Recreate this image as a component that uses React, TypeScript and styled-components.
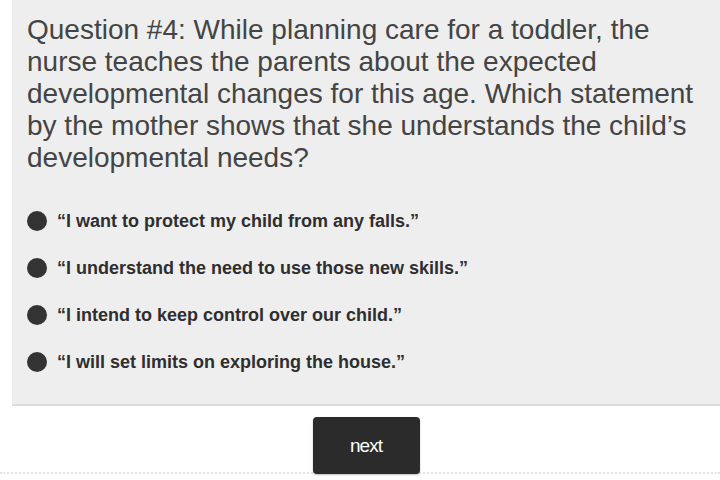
import React from 'react';
import styled, { createGlobalStyle } from 'styled-components';

const GlobalStyle = createGlobalStyle`
  html, body {
    margin: 0;
    padding: 0;
    background: #ffffff;
  }
  body {
    font-family: "Liberation Sans", Arial, sans-serif;
  }
`

const Page = styled.div`
  width: 720px;
  height: 480px;
  overflow: hidden;
`

const Panel = styled.section`
  margin-left: 12px;
  background: #eeeeee;
  border-bottom: 2px solid #dcdcdc;
  padding: 14px 10px 0 15px;
  height: 390px;
  box-sizing: content-box;
`

const Question = styled.h2`
  margin: 0;
  font-size: 28px;
  font-weight: normal;
  line-height: 32px;
  color: #444444;
`

const Options = styled.ul`
  list-style: none;
  margin: 37px 0 0 0;
  padding: 0;
  display: flex;
  flex-direction: column;
  gap: 27px;
`

const Option = styled.li`
  display: flex;
  align-items: center;
  gap: 10px;
  height: 20px;
  font-size: 18px;
  font-weight: bold;
  color: #2e2e2e;
`

const Dot = styled.span`
  width: 20px;
  height: 20px;
  border-radius: 50%;
  background: #333333;
  flex-shrink: 0;
`

const Footer = styled.div`
  display: flex;
  justify-content: center;
  padding-top: 11px;
  height: 55px;
  border-bottom: 2px dotted #e6e6e6;
`

const NextButton = styled.button`
  width: 107px;
  height: 57px;
  margin-left: 12px;
  border: none;
  border-radius: 4px;
  background: #2b2b2b;
  color: #ffffff;
  font-family: "Liberation Sans", Arial, sans-serif;
  font-size: 19px;
  letter-spacing: -1px;
  cursor: pointer;
  box-shadow: 0 1px 2px rgba(0, 0, 0, 0.25);
`

const answers = [
  '“I want to protect my child from any falls.”',
  '“I understand the need to use those new skills.”',
  '“I intend to keep control over our child.”',
  '“I will set limits on exploring the house.”',
];

function App() {
  return (
    <Page>
      <GlobalStyle />
      <Panel>
        <Question>
          Question #4: While planning care for a toddler, the nurse teaches the parents about the expected
          developmental changes for this age. Which statement by the mother shows that she understands the
          child’s developmental needs?
        </Question>
        <Options>
          {answers.map((a) => (
            <Option key={a}>
              <Dot />
              {a}
            </Option>
          ))}
        </Options>
      </Panel>
      <Footer>
        <NextButton>next</NextButton>
      </Footer>
    </Page>
  );
}

export default App;
